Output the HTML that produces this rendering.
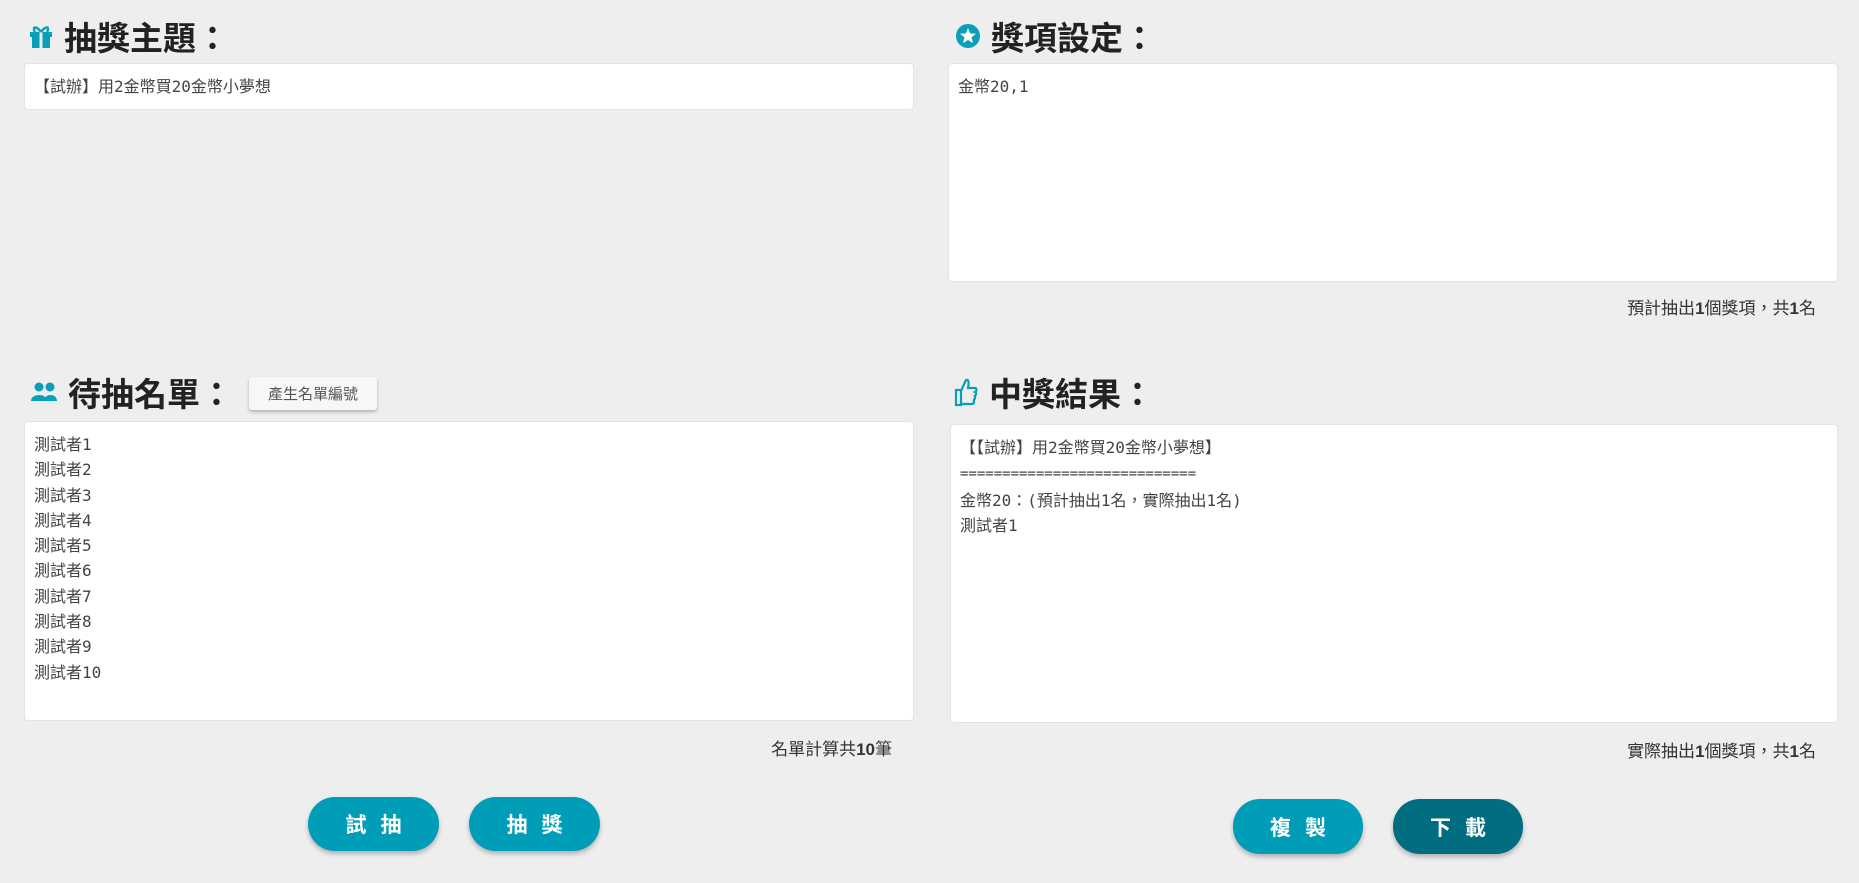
<!DOCTYPE html>
<html><head><meta charset="utf-8"><style>
*{box-sizing:border-box;margin:0;padding:0}
body{width:1859px;height:883px;background:#eeeeee;font-family:"Liberation Sans","Noto Sans CJK TC",sans-serif;color:#333;position:relative;overflow:hidden}
.h{position:absolute;font-size:33px;font-weight:bold;color:#222;display:flex;align-items:center;gap:10px;height:40px}
.box{position:absolute;background:#fff;border-radius:4px;font-family:"DejaVu Sans Mono","Noto Sans CJK TC",monospace;font-size:16px;color:#444;padding:10px 9px;line-height:25.3px;border:1px solid #e4e4e4}
.note{position:absolute;font-size:17px;color:#333;text-align:right}
.btn{position:absolute;border-radius:27px;color:#fff;font-size:21px;font-weight:bold;display:flex;align-items:center;justify-content:center;letter-spacing:14px;padding-left:14px;box-shadow:0 3px 5px rgba(0,0,0,.25)}
.t{background:#009db8}.d{background:#006e80}
.small{position:absolute;left:249px;top:377px;width:128px;height:33px;background:#f7f7f7;border-radius:3px;box-shadow:0 2px 3px rgba(0,0,0,.25);font-size:15px;color:#555;display:flex;align-items:center;justify-content:center}
</style></head><body>
<div class="h" style="left:28px;top:16px"><svg width="26" height="26" viewBox="0 0 26 26"><rect x="2" y="9" width="22" height="5" fill="#0a9fb8"/><rect x="4" y="14" width="18" height="11" fill="#0a9fb8"/><rect x="11.5" y="9" width="3" height="16" fill="#eee"/><path d="M13 9 C8 2 4 4 7 9 M13 9 C18 2 22 4 19 9" stroke="#0a9fb8" stroke-width="2.5" fill="none"/></svg>抽獎主題：</div>
<div class="box" style="left:24px;top:63px;width:890px;height:47px;padding-top:10px">【試辦】用2金幣買20金幣小夢想</div>

<div class="h" style="left:955px;top:16px"><svg width="26" height="26" viewBox="0 0 26 26"><circle cx="13" cy="13" r="12" fill="#0a9fb8"/><path d="M13 5 L15.2 10.5 L21 10.8 L16.5 14.5 L18 20 L13 17 L8 20 L9.5 14.5 L5 10.8 L10.8 10.5Z" fill="#fff"/></svg>獎項設定：</div>
<div class="box" style="left:948px;top:63px;width:890px;height:219px">金幣20,1</div>
<div class="note" style="right:43px;top:294px">預計抽出<b>1</b>個獎項，共<b>1</b>名</div>

<div class="h" style="left:30px;top:372px"><svg width="28" height="22" viewBox="0 0 28 22"><circle cx="9" cy="6" r="4.5" fill="#0a9fb8"/><circle cx="20" cy="6" r="4.5" fill="#0a9fb8"/><path d="M1 20 C1 12 17 12 17 20Z M14 20 C14 12 27 12 27 20Z" fill="#0a9fb8"/></svg>待抽名單：</div>
<div class="small">產生名單編號</div>
<div class="box" style="left:24px;top:421px;width:890px;height:300px">測試者1<br>測試者2<br>測試者3<br>測試者4<br>測試者5<br>測試者6<br>測試者7<br>測試者8<br>測試者9<br>測試者10</div>
<div class="note" style="right:967px;top:735px">名單計算共<b>10</b>筆</div>

<div class="h" style="left:953px;top:372px"><svg width="26" height="30" viewBox="0 0 26 30"><path d="M3 13 H8 V28 H3Z M8 14 L13 3 C16 2 16 6 15 11 H22 C24 11 24 14 22 15 C24 16 23 19 21 19 C23 20 22 23 20 23 C22 24 21 27 19 27 H8" stroke="#0a9fb8" stroke-width="2.2" fill="none"/></svg>中獎結果：</div>
<div class="box" style="left:950px;top:424px;width:888px;height:299px">【【試辦】用2金幣買20金幣小夢想】<br><span style="font-size:14px">============================</span><br>金幣20：(預計抽出1名，實際抽出1名)<br>測試者1</div>
<div class="note" style="right:43px;top:737px">實際抽出<b>1</b>個獎項，共<b>1</b>名</div>

<div class="btn t" style="left:308px;top:797px;width:131px;height:54px">試抽</div>
<div class="btn t" style="left:469px;top:797px;width:131px;height:54px">抽獎</div>
<div class="btn t" style="left:1233px;top:799px;width:130px;height:55px">複製</div>
<div class="btn d" style="left:1393px;top:799px;width:130px;height:55px">下載</div>
</body></html>
